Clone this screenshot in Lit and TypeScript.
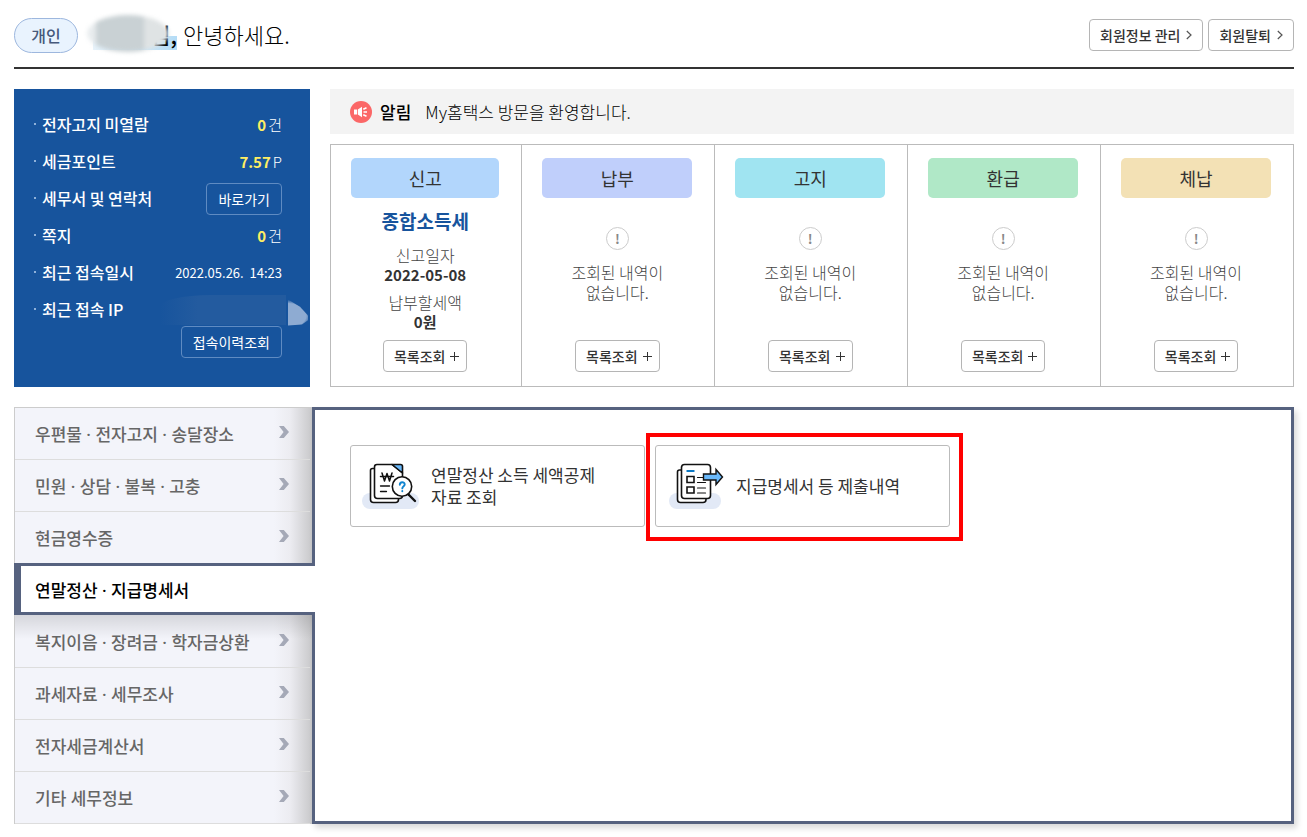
import { LitElement, html, css, svg, nothing } from "lit";
import { customElement, state } from "lit/decorators.js";
import { classMap } from "lit/directives/class-map.js";

const MENU = [
  "우편물 · 전자고지 · 송달장소",
  "민원 · 상담 · 불복 · 고충",
  "현금영수증",
  "연말정산 · 지급명세서",
  "복지이음 · 장려금 · 학자금상환",
  "과세자료 · 세무조사",
  "전자세금계산서",
  "기타 세무정보",
];

const STATUS = [
  { title: "신고", tone: "blue", filed: true },
  { title: "납부", tone: "indigo", filed: false },
  { title: "고지", tone: "cyan", filed: false },
  { title: "환급", tone: "green", filed: false },
  { title: "체납", tone: "sand", filed: false },
];

const smallChevron = svg`<svg class="chev" width="6" height="10" viewBox="0 0 6 10" fill="none" stroke="#555" stroke-width="1.2"><path d="M.8 1 5 5 .8 9"/></svg>`;

const menuChevron = svg`<svg class="arrow" width="10" height="12" viewBox="0 0 10 12"><path d="M0 0h4.800L10 6l-5.200 6H0l4.600-6z" fill="#a5a9b7"/></svg>`;

const megaphone = svg`<svg class="mega" width="22" height="22" viewBox="0 0 22 22"><circle cx="11" cy="11" r="11" fill="#fb6767"/><g fill="#fff"><path d="M4 8.500h3v5H4zM7.800 8.500 12 5.800v10.400l-4.200-2.700z"/></g><path d="M13.300 8.200l3.200-1.400M13.500 11h3.500M13.300 13.800l3.200 1.400" stroke="#fff" stroke-width="1.700"/></svg>`;

const plus = svg`<svg width="9" height="9" viewBox="0 0 9 9" stroke="#333" stroke-width="1"><path d="M0 4.500h9M4.500 0v9"/></svg>`;

const searchDocIcon = svg`<svg width="57" height="46" viewBox="0 0 57 46" fill="none" stroke="#111" stroke-width="1.600" stroke-linecap="round" stroke-linejoin="round">
  <rect x="0" y="30" width="57" height="16" rx="8" fill="#e2e9f6" stroke="none"/>
  <path d="M12 5.500H10.500a2 2 0 0 0-2 2V36.500a3 3 0 0 0 3 3H33.500a3 3 0 0 0 3-3V35" fill="#fff"/>
  <path d="M15 1.500H30L40.500 10V32.500a3 3 0 0 1-3 3H15.500a3 3 0 0 1-3-3V4a2.500 2.500 0 0 1 2.500-2.500z" fill="#fff"/>
  <path d="M30 1.500H38.500a2 2 0 0 1 2 2V10z" fill="#69b8fa"/>
  <path d="M20 10l2.500 8L25 10.500 27.500 18 30 10M18.500 13.500h13" stroke-width="1.500"/>
  <path d="M18.500 23h9M18.500 28.500h6" stroke-width="1.300"/>
  <path d="M46.500 31.500 53 38" stroke-width="2.400"/>
  <circle cx="40" cy="23.500" r="9.700" fill="#fff"/>
  <path d="M37.800 21.700c0-3.200 4.900-3.200 4.900-.3 0 1.800-2.400 1.800-2.400 4M40.300 28v.2" stroke="#1185d0" stroke-width="1.900"/>
</svg>`;

const sendDocIcon = svg`<svg width="57" height="46" viewBox="0 0 57 46" fill="none" stroke="#111" stroke-width="1.600" stroke-linecap="round" stroke-linejoin="round">
  <rect x="2" y="30" width="52" height="16" rx="8" fill="#e2e9f6" stroke="none"/>
  <path d="M14 7h-1.500a2 2 0 0 0-2 2V36.500a3 3 0 0 0 3 3H36a3 3 0 0 0 3-3V35" fill="#fff"/>
  <rect x="14.500" y="1.500" width="29" height="34" rx="3" fill="#fff"/>
  <path d="M19.500 8h8" stroke="#0b78c4" stroke-width="2" stroke-linecap="butt"/>
  <path d="M20 13.500h7v6h-7zM20 24h7v6h-7z" stroke-linejoin="miter"/>
  <path d="M30.500 14.500h6M30.500 19.500h8M30.500 25h8M30.500 30h8" stroke-width="1.200"/>
  <path d="M36.500 11h12.500V6.500l6.500 7.500-6.500 7.500V17H36.500z" fill="#69b8fa" stroke-linejoin="miter" stroke-width="1.400"/>
</svg>`;

@customElement("app-root")
export class AppRoot extends LitElement {
  @state() private active = 3;

  static styles = css`
    :host {
      display: block;
      padding: 0 13px 12px 14px;
      background: #fff;
      color: #333;
      font-family: "Noto Sans CJK KR", "Noto Sans", sans-serif;
      font-size: 16px;
      line-height: 20px;
    }
    * { box-sizing: border-box; }
    h1, h2, p, ul, dl, dt, dd { margin: 0; padding: 0; }
    ul { list-style: none; }
    svg { display: block; flex: none; }
    button { font-family: inherit; cursor: pointer; margin: 0; }

    .head {
      display: flex;
      align-items: center;
      justify-content: space-between;
      height: 69px;
      border-bottom: 2px solid #333;
    }
    .hello { display: flex; align-items: center; font-weight: 300; font-size: 22px; line-height: 30px; color: #000; padding-top: 4px; }
    .greeting { padding-bottom: 3px; }
    .kind {
      display: flex;
      align-items: center;
      justify-content: center;
      width: 64px;
      height: 35px;
      padding-bottom: 1px;
      border: 1px solid #9db7de;
      border-radius: 18px;
      background: #e9f3fe;
      color: #46597c;
      font-size: 16px;
      font-weight: 500;
    }
    .name { position: relative; width: 84px; margin: 0 6px 0 15px; padding-bottom: 3px; text-align: right; font-weight: 500; }
    .smudge {
      position: absolute;
      inset: -4px 8px 0 -6px;
      border-radius: 50%;
      background: linear-gradient(90deg, #e8ecee 0 8px, #c9d1d4 10px 56px, #dfe3e4 58px);
      filter: blur(2px);
    }
    .edge { position: absolute; right: 0; bottom: 2px; left: 0; height: 14px; background: linear-gradient(90deg, #e8f3fb, #b4dcf6); }
    .suffix { position: relative; }
    .tools { display: flex; gap: 5px; padding-top: 2px; }
    .small {
      display: inline-flex;
      align-items: center;
      justify-content: center;
      gap: 6px;
      height: 32px;
      padding: 0 10px;
      border: 1px solid #b5b5b5;
      border-radius: 4px;
      background: #fff;
      color: #333;
      font-size: 14px;
      font-weight: 500;
      line-height: 20px;
      white-space: nowrap;
    }
    .list { gap: 5px; padding: 0 7px 0 10px; }

    .top { display: grid; grid-template-columns: 296px minmax(0, 1fr); gap: 20px; margin-top: 20px; }
    .account { background: #17549d; color: #fff; padding: 17px 28px 29px 20px; }
    .row { display: flex; align-items: center; justify-content: space-between; height: 37px; }
    .row dt { display: flex; align-items: center; gap: 6px; padding-bottom: 2px; font-weight: 500; }
    .row dt::before { content: ""; width: 2px; height: 2px; background: #8fb1da; }
    .row dd { font-size: 15px; font-weight: 300; }
    .row .date { font-size: 13px; font-weight: 400; white-space: pre; }
    .num { color: #ffee63; font-weight: 700; margin-right: 2px; }
    .ghost { padding: 0 11px; background: transparent; border-color: #5f8bc2; color: #fff; font-weight: 400; }
    .history { display: flex; justify-content: flex-end; margin-top: -2px; }
    .masked {
      position: relative;
      width: 130px;
      height: 26px;
    }
    .masked::before {
      content: "";
      position: absolute;
      inset: -2px -4px -2px 8px;
      background: linear-gradient(90deg, #17549d, #235b9f 30%, #235b9f);
      border-radius: 40% 0 0 0;
    }
    .masked::after {
      content: "";
      position: absolute;
      top: 3px;
      right: -26px;
      width: 20px;
      height: 26px;
      background: radial-gradient(ellipse 24px 16px at 0 60%, #8eabd2 75%, #17549d00);
      clip-path: polygon(0 0, 60% 28%, 100% 62%, 100% 80%, 70% 96%, 0 100%);
    }

    .right { display: flex; flex-direction: column; gap: 10px; }
    .notice { display: flex; align-items: center; height: 45px; padding: 0 20px; background: #f3f3f3; color: #000; }
    .notice strong { margin: 0 14px 0 8px; font-size: 17px; font-weight: 500; }
    .notice span { font-size: 17px; font-weight: 300; }
    .status { flex: 1; display: grid; grid-template-columns: calc(20% - 2px) repeat(4, minmax(0, 1fr)); border: 1px solid #bbb; }
    .cell { display: flex; flex-direction: column; align-items: center; padding: 13px 22px 14px 20px; text-align: center; }
    .cell + .cell { border-left: 1px solid #bbb; }
    .pill { align-self: stretch; padding: 10px 0; border-radius: 5px; font-size: 18px; font-weight: 400; line-height: 20px; color: #333; }
    .blue { background: #b2d6fc; }
    .indigo { background: #c0cffb; }
    .cyan { background: #a0e4f1; }
    .green { background: #b0e8c7; }
    .sand { background: #f3e1b5; }
    .body { flex: 1; display: flex; flex-direction: column; align-items: center; }
    .tax { margin: 13px 0 14px; color: #17549d; font-size: 19px; font-weight: 700; }
    .label { color: #444; font-weight: 300; }
    .value { font-size: 15px; font-weight: 700; margin-bottom: 7px; }
    .mark {
      display: flex;
      align-items: center;
      justify-content: center;
      width: 23px;
      height: 23px;
      margin: 29px 0 12px;
      border: 1px solid #ccc;
      border-radius: 50%;
      color: #888;
      font-size: 13px;
      font-weight: 700;
    }
    .none { color: #444; font-weight: 300; }

    .bottom { display: grid; grid-template-columns: 298px minmax(0, 1fr); margin-top: 20px; }
    .menu { border: solid #ccc; border-width: 1px 0 0 1px; background: linear-gradient(90deg, #f3f4fa calc(100% - 38px), #ececf1 calc(100% - 22px), #c8c8ca); }
    .item {
      display: flex;
      align-items: center;
      justify-content: space-between;
      width: calc(100% - 2px);
      height: 52px;
      padding: 0 21px 0 20px;
      border: solid #ddd;
      border-width: 0 0 1px;
      background: none;
      color: #666;
      font-family: "Noto Sans", "Noto Sans CJK KR", sans-serif;
      font-size: 17px;
      font-weight: 500;
      text-align: left;
    }
    .arrow { margin-bottom: 3px; }
    .item.on {
      position: relative;
      z-index: 1;
      width: calc(100% + 4px);
      margin: -1px 0 0 -1px;
      padding: 0 20px 0 14px;
      border: solid #56627f;
      border-width: 3px 0 3px 7px;
      background: #fff;
      color: #000;
    }
    .after { background: linear-gradient(#0000001f, #00000000 24px); }
    .after .item { height: 53px; }
    .panel {
      display: grid;
      grid-template-columns: repeat(3, minmax(0, 1fr));
      align-content: start;
      gap: 10px;
      padding: 35px 36px 35px 35px;
      border: 3px solid #56627f;
      background: #fff;
      box-shadow: 3px 4px 6px #00000026;
    }
    .link {
      position: relative;
      display: flex;
      align-items: center;
      gap: 12px;
      height: 82px;
      padding: 0 11px;
      border: 1px solid #bbb;
      border-radius: 3px;
      color: #333;
      font-size: 17px;
      font-weight: 400;
      line-height: 22px;
      text-decoration: none;
    }
    .focus::after { content: ""; position: absolute; inset: -13px -14px -15px -10px; border: 4px solid #f00; }
  `;

  private count(label: string, value: string, unit: string) {
    return html`<div class="row"><dt>${label}</dt><dd><span class="num">${value}</span>${unit}</dd></div>`;
  }

  render() {
    return html`
      <header class="head">
        <h1 class="hello">
          <span class="kind">개인</span>
          <span class="name"><span class="edge"></span><span class="suffix">님,</span><span class="smudge"></span></span>
          <span class="greeting">안녕하세요.</span>
        </h1>
        <div class="tools">
          <button class="small">회원정보 관리 ${smallChevron}</button>
          <button class="small">회원탈퇴 ${smallChevron}</button>
        </div>
      </header>

      <section class="top">
        <div class="account">
          <dl>
            ${this.count("전자고지 미열람", "0", "건")}
            ${this.count("세금포인트", "7.57", "P")}
            <div class="row"><dt>세무서 및 연락처</dt><dd><button class="small ghost">바로가기</button></dd></div>
            ${this.count("쪽지", "0", "건")}
            <div class="row"><dt>최근 접속일시</dt><dd class="date">2022.05.26.  14:23</dd></div>
            <div class="row"><dt>최근 접속 IP</dt><dd class="masked"></dd></div>
          </dl>
          <div class="history"><button class="small ghost">접속이력조회</button></div>
        </div>

        <div class="right">
          <div class="notice">${megaphone}<strong>알림</strong><span>My홈택스 방문을 환영합니다.</span></div>
          <div class="status">
            ${STATUS.map((s) => html`
              <div class="cell">
                <h2 class="pill ${s.tone}">${s.title}</h2>
                <div class="body">
                  ${s.filed
                    ? html`
                        <p class="tax">종합소득세</p>
                        <p class="label">신고일자</p>
                        <p class="value">2022-05-08</p>
                        <p class="label">납부할세액</p>
                        <p class="value">0원</p>`
                    : html`
                        <span class="mark">!</span>
                        <p class="none">조회된 내역이<br />없습니다.</p>`}
                </div>
                <button class="small list">목록조회 ${plus}</button>
              </div>`)}
          </div>
        </div>
      </section>

      <section class="bottom">
        <nav class="menu">
          <ul>
            ${MENU.map((label, i) => html`
              <li class=${classMap({ after: i === this.active + 1 })}>
                <button class=${classMap({ item: true, on: i === this.active })} @click=${() => (this.active = i)}>
                  ${label}${i === this.active ? nothing : menuChevron}
                </button>
              </li>`)}
          </ul>
        </nav>
        <div class="panel">
          <a class="link" href="#deduction">${searchDocIcon}<span>연말정산 소득 세액공제<br />자료 조회</span></a>
          <a class="link focus" href="#statements">${sendDocIcon}<span>지급명세서 등 제출내역</span></a>
        </div>
      </section>
    `;
  }
}
